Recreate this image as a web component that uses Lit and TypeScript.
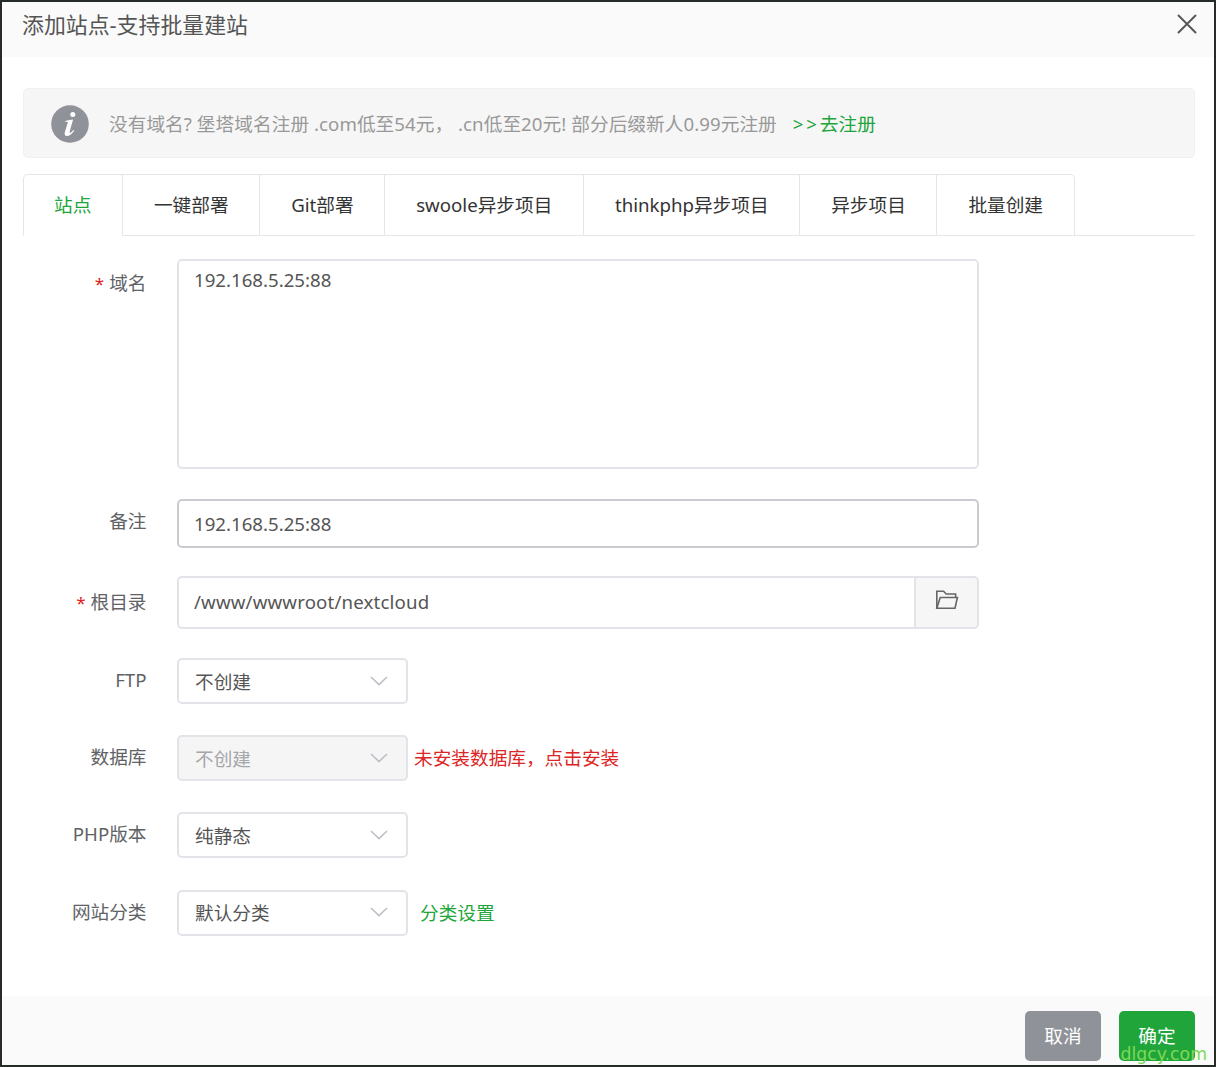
import { LitElement, html, css, svg, nothing } from 'lit';
import { customElement, property, state } from 'lit/decorators.js';
import { classMap } from 'lit/directives/class-map.js';

const TABS = ['站点', '一键部署', 'Git部署', 'swoole异步项目', 'thinkphp异步项目', '异步项目', '批量创建'];

@customElement('form-row')
class FormRow extends LitElement {
  @property() label = '';
  @property({ type: Boolean }) required = false;

  static styles = css`
    :host {
      display: flex;
      align-items: stretch;
    }

    .label {
      width: 123.5px;
      flex: none;
      box-sizing: border-box;
      margin-right: 30.5px;
      padding-top: var(--label-top, 8px);
      line-height: 28px;
      text-align: right;
      white-space: nowrap;
      color: #606266;
    }

    .star {
      color: #e02020;
      margin-right: 5px;
      font-size: 17px;
    }

    .content {
      display: flex;
      align-items: stretch;
    }
  `;

  render() {
    return html`
      <div class="label">${this.required ? html`<span class="star">*</span>` : nothing}${this.label}</div>
      <div class="content"><slot></slot></div>
    `;
  }
}

@customElement('select-box')
class SelectBox extends LitElement {
  @property() value = '';
  @property({ type: Boolean }) disabled = false;

  static styles = css`
    .select {
      display: flex;
      align-items: center;
      justify-content: space-between;
      box-sizing: border-box;
      width: 231px;
      height: 46px;
      padding: 1px 18px 0 16px;
      border: 2px solid #e3e4ea;
      border-radius: 5px;
      background: #fff;
      color: #555;
    }

    .disabled {
      background: #f5f5f5;
      color: #a4a6aa;
    }

    svg {
      display: block;
      margin-top: -2px;
    }
  `;

  render() {
    return html`
      <div class=${classMap({ select: true, disabled: this.disabled })}>
        <span>${this.value}</span>
        <svg width="18" height="12" viewBox="0 0 18 12" fill="none" stroke="#bcbfc6" stroke-width="1.6">
          <path d="M1 2 L9 9.6 L17 2" />
        </svg>
      </div>
    `;
  }
}

@customElement('app-root')
class AppRoot extends LitElement {
  @state() active = 0;

  static styles = css`
    :host {
      display: block;
      font-family: 'Noto Sans', 'Noto Sans CJK SC', sans-serif;
      font-size: 18.67px;
      line-height: 28px;
      color: #555;
    }

    .dialog {
      position: relative;
      display: flex;
      flex-direction: column;
      box-sizing: border-box;
      height: 1067px;
      border: 2px solid #262b27;
      background: #fff;
    }

    .header {
      display: flex;
      justify-content: space-between;
      box-sizing: border-box;
      height: 55px;
      padding: 9px 17px 0 20px;
      background: #fafafa;
      font-size: 21.9px;
      color: #555;
    }

    .header svg {
      margin-top: 3px;
    }

    .body {
      flex: 1;
      padding: 31px 19px 0 21px;
    }

    .notice {
      display: flex;
      align-items: center;
      box-sizing: border-box;
      height: 70px;
      padding: 1px 0 0 27px;
      border: 1px solid #f0f0f2;
      border-radius: 5px;
      background: #f6f6f6;
      color: #999;
      white-space: nowrap;
      letter-spacing: 0.05px;
    }

    .notice svg {
      margin-right: 20px;
    }

    .notice .link {
      margin-left: 16px;
    }

    .arrows {
      letter-spacing: 2.8px;
    }

    .link {
      color: #20a53a;
    }

    .tabs {
      display: flex;
      margin-top: 16px;
      height: 62px;
    }

    .tab {
      box-sizing: border-box;
      padding: 16px 30.6px 0 31px;
      border: 1px solid #e4e6ec;
      border-left: none;
      color: #333;
      white-space: nowrap;
      cursor: pointer;
    }

    .tab:first-child {
      border-left: 1px solid #e4e6ec;
      border-top-left-radius: 5px;
      padding-left: 30px;
    }

    .tab:last-of-type {
      border-top-right-radius: 5px;
    }

    .tab.active {
      color: #20a53a;
      border-bottom-color: transparent;
    }

    .rest {
      flex: 1;
      border-bottom: 1px solid #e4e6ec;
    }

    .form {
      padding-top: 23px;
    }

    .domain {
      height: 210px;
      margin-bottom: 30px;
      --label-top: 10px;
    }

    .remark {
      height: 49px;
      margin-bottom: 28px;
    }

    .path {
      height: 53px;
      margin-bottom: 29px;
      --label-top: 12px;
    }

    .pick {
      height: 46px;
      margin-bottom: 31.2px;
    }

    textarea,
    input {
      display: block;
      box-sizing: border-box;
      width: 802px;
      margin: 0;
      padding: 0 15px;
      border: 2px solid #e3e4ea;
      border-radius: 5px;
      outline: none;
      background: #fff;
      color: #555;
      font: inherit;
      resize: none;
      overflow: hidden;
    }

    textarea {
      padding-top: 5px;
    }

    .remark input {
      border-color: #c9cbd1;
    }

    .path input {
      width: 737px;
      padding-bottom: 2px;
      border-right: none;
      border-radius: 5px 0 0 5px;
      letter-spacing: 0.16px;
    }

    .folder {
      display: flex;
      align-items: center;
      justify-content: center;
      box-sizing: border-box;
      width: 65px;
      padding-bottom: 5px;
      border: 2px solid #e3e4ea;
      border-radius: 0 5px 5px 0;
      background: #f6f6f6;
    }

    .side {
      margin-left: 12px;
      padding-top: 9px;
      white-space: nowrap;
    }

    .warn {
      margin-left: 6px;
      color: #dc2626;
    }

    .footer {
      display: flex;
      justify-content: flex-end;
      gap: 18px;
      box-sizing: border-box;
      height: 69px;
      padding: 15px 19px 0 0;
      background: #fafafa;
    }

    button {
      width: 76px;
      height: 50px;
      padding: 0;
      border: none;
      border-radius: 5px;
      background: #8f9299;
      color: #fff;
      font: inherit;
    }

    .ok {
      background: #20a53a;
    }

    .watermark {
      position: absolute;
      right: 7px;
      bottom: -1px;
      font-family: 'DejaVu Sans', sans-serif;
      font-size: 17.3px;
      line-height: 24px;
      color: #7ed957;
    }
  `;

  renderInfo() {
    return svg`
      <svg width="38" height="38" viewBox="0 0 38 38">
        <circle cx="19" cy="19" r="18.8" fill="#8f9299" />
        <circle cx="21.8" cy="9.4" r="2.5" fill="#fff" />
        <path
          d="M14.3 15.9 C17 15.3 19.8 14.8 22.1 14.5 L18.6 26.8 C18.2 28.5 19.3 28.3 22.6 24.9 L23.3 25.8 C20.5 29.4 18 31.2 15.8 31.1 C13.7 31 13.2 29.3 13.9 27 L16.8 17.6 C17 16.8 16.2 16.8 14.3 16.9 Z"
          fill="#fff"
        />
      </svg>
    `;
  }

  render() {
    return html`
      <div class="dialog">
        <div class="header">
          <span>添加站点-支持批量建站</span>
          <svg width="20" height="20" viewBox="0 0 20 20" stroke="#555" stroke-width="1.9" stroke-linecap="round">
            <path d="M1.5 1.5 L18.5 18.5 M18.5 1.5 L1.5 18.5" />
          </svg>
        </div>

        <div class="body">
          <div class="notice">
            ${this.renderInfo()}
            <span>没有域名? 堡塔域名注册 .com低至54元， .cn低至20元! 部分后缀新人0.99元注册</span>
            <span class="link"><span class="arrows">&gt;&gt;</span>去注册</span>
          </div>

          <div class="tabs">
            ${TABS.map(
              (tab, i) => html`<span
                class=${classMap({ tab: true, active: i === this.active })}
                @click=${() => (this.active = i)}
              >${tab}</span>`
            )}
            <div class="rest"></div>
          </div>

          <div class="form">
            <form-row class="domain" label="域名" required>
              <textarea spellcheck="false" .value=${'192.168.5.25:88'}></textarea>
            </form-row>
            <form-row class="remark" label="备注">
              <input .value=${'192.168.5.25:88'} />
            </form-row>
            <form-row class="path" label="根目录" required>
              <input .value=${'/www/wwwroot/nextcloud'} />
              <div class="folder">
                <svg width="24" height="20" viewBox="0 0 24 20" fill="none" stroke="#666" stroke-width="1.6">
                  <path d="M1.8 18.2 V1.2 H8.6 L11.2 4 H20.6 V7.4" />
                  <path d="M1.8 18.2 L5.2 7.5 H22.4 L20 18.2 Z" />
                </svg>
              </div>
            </form-row>
            <form-row class="pick" label="FTP">
              <select-box value="不创建"></select-box>
            </form-row>
            <form-row class="pick" label="数据库">
              <select-box value="不创建" disabled></select-box>
              <span class="side warn">未安装数据库，点击安装</span>
            </form-row>
            <form-row class="pick" label="PHP版本">
              <select-box value="纯静态"></select-box>
            </form-row>
            <form-row class="pick" label="网站分类">
              <select-box value="默认分类"></select-box>
              <span class="side link">分类设置</span>
            </form-row>
          </div>
        </div>

        <div class="footer">
          <button>取消</button>
          <button class="ok">确定</button>
        </div>
        <span class="watermark">dlgcy.com</span>
      </div>
    `;
  }
}
